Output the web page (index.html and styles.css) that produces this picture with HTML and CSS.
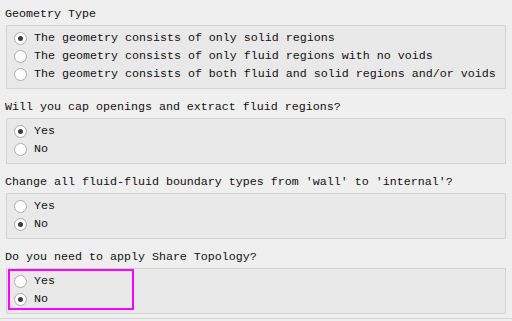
FILE: index.html
```html
<!DOCTYPE html>
<html lang="en">
<head>
    <meta charset="UTF-8">
    <title>Geometry setup</title>
    <link rel="stylesheet" href="styles.css">
</head>
<body>

    <div class="question first">Geometry Type</div>
    <div class="options">
        <div class="option"><span class="radio checked"></span>The geometry consists of only solid regions</div>
        <div class="option"><span class="radio"></span>The geometry consists of only fluid regions with no voids</div>
        <div class="option"><span class="radio"></span>The geometry consists of both fluid and solid regions and/or voids</div>
    </div>

    <div class="question">Will you cap openings and extract fluid regions?</div>
    <div class="options">
        <div class="option"><span class="radio checked"></span>Yes</div>
        <div class="option"><span class="radio"></span>No</div>
    </div>

    <div class="question">Change all fluid-fluid boundary types from 'wall' to 'internal'?</div>
    <div class="options">
        <div class="option"><span class="radio"></span>Yes</div>
        <div class="option"><span class="radio checked"></span>No</div>
    </div>

    <div class="question">Do you need to apply Share Topology?</div>
    <div class="options marked">
        <div class="option"><span class="radio"></span>Yes</div>
        <div class="option"><span class="radio checked"></span>No</div>
        <div class="highlight"></div>
    </div>

    <div class="footer-line"></div>

</body>
</html>
```

FILE: styles.css
```css
body {
    margin: 0;
    padding: 5px 6px 0 5px;
    background-color: #efefef;
    color: #111;
    font-family: 'Liberation Mono', 'DejaVu Sans Mono', monospace;
    font-size: 11.67px;
    overflow: hidden;
}

.question {
    height: 18px;
    line-height: 18px;
    margin: 9px 0 2px 0;
    white-space: nowrap;
}

.question.first {
    margin-top: 0;
}

.options {
    margin-left: 1px;
    padding: 3px 0 5px 7px;
    background-color: #e9e9e9;
    border: 1px solid #d3d3d3;
    border-radius: 1px;
}

.option {
    display: flex;
    align-items: center;
    height: 18px;
    line-height: 18px;
    white-space: nowrap;
}

.radio {
    width: 11px;
    height: 11px;
    margin-right: 7px;
    border: 1px solid #adadad;
    border-radius: 50%;
    background-color: #fff;
    display: flex;
    align-items: center;
    justify-content: center;
    flex-shrink: 0;
}

.radio.checked::after {
    content: "";
    width: 5px;
    height: 5px;
    border-radius: 50%;
    background-color: #3c3c3c;
}

.marked {
    position: relative;
}

/* annotation frame drawn over the last question */
.highlight {
    position: absolute;
    left: 1px;
    top: 0;
    width: 122px;
    height: 37px;
    border: 2px solid #ff00ff;
}

.footer-line {
    margin: 4px -6px 0 -5px;
    border-top: 1px solid #d6d6d6;
}
```
